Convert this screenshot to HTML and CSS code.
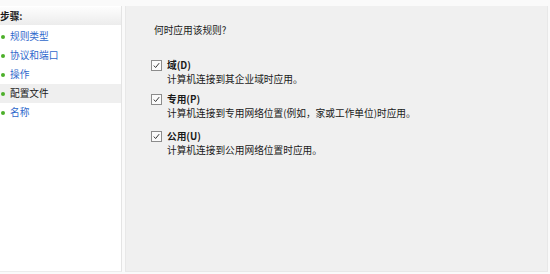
FILE: index.html
```html
<!DOCTYPE html>
<html lang="zh-CN">
  <head>
    <meta charset="UTF-8" />
    <title>新建入站规则向导 - 配置文件</title>
    <link rel="stylesheet" href="styles.css">
  </head>
  <body>
    <!-- 向导主体 -->
    <div class="wizard">
      <!-- 左侧步骤 -->
      <aside class="steps">
        <div class="steps-head">步骤:</div>
        <ul class="step-list">
          <li class="step">规则类型</li>
          <li class="step">协议和端口</li>
          <li class="step">操作</li>
          <li class="step on">配置文件</li>
          <li class="step">名称</li>
        </ul>
      </aside>

      <!-- 右侧内容 -->
      <main class="page">
        <p class="ask">何时应用该规则?</p>

        <div class="opt opt1">
          <span class="chk">
            <svg viewBox="0 0 11 11"><path d="M2.2 5.6 4.4 8 8.8 2.6" /></svg>
          </span>
          <div class="opt-txt">
            <div class="opt-name">域(D)</div>
            <div class="opt-desc">计算机连接到其企业域时应用。</div>
          </div>
        </div>

        <div class="opt opt2">
          <span class="chk">
            <svg viewBox="0 0 11 11"><path d="M2.2 5.6 4.4 8 8.8 2.6" /></svg>
          </span>
          <div class="opt-txt">
            <div class="opt-name">专用(P)</div>
            <div class="opt-desc">计算机连接到专用网络位置(例如，家或工作单位)时应用。</div>
          </div>
        </div>

        <div class="opt opt3">
          <span class="chk">
            <svg viewBox="0 0 11 11"><path d="M2.2 5.6 4.4 8 8.8 2.6" /></svg>
          </span>
          <div class="opt-txt">
            <div class="opt-name">公用(U)</div>
            <div class="opt-desc">计算机连接到公用网络位置时应用。</div>
          </div>
        </div>
      </main>
    </div>
  </body>
</html>
```

FILE: styles.css
```css
html,
body {
  margin: 0;
  padding: 0;
  overflow: hidden;
}
body {
  background: #fafafa;
  font-family: "Noto Sans CJK SC", "Liberation Sans", sans-serif;
  font-size: 9.7px;
  color: #1a1a1a;
}

/* 전체 */
.wizard {
  display: flex;
  padding-top: 6px;
  height: 266px;
}

/* 왼쪽 단계 */
.steps {
  width: 121px;
  background: #fff;
  border-right: 1px solid #e4e4e4;
  border-bottom: 1px solid #ececec;
}
.steps-head {
  height: 18px;
  line-height: 18px;
  margin-top: 1px;
  padding-left: 0;
  font-weight: bold;
  background: linear-gradient(to bottom, #fdfdfd, #ececec);
}
.step-list {
  list-style: none;
  margin: 0;
  padding: 2px 0 0;
}
.step {
  position: relative;
  height: 19px;
  line-height: 19px;
  padding-left: 10px;
  color: #2f68cc;
}
/* 초록 점 */
.step::before {
  content: "";
  position: absolute;
  left: 1px;
  top: 8px;
  width: 4px;
  height: 4px;
  border-radius: 50%;
  background: #4caf2a;
}
.step.on {
  color: #1a1a1a;
  background: #efefef;
}

/* 오른쪽 내용 */
.page {
  flex: 1;
  margin: 0 2px 0 3px;
  padding: 17px 0 0 28px;
  background: #f0f0f0;
  border: 1px solid #e8e8e8;
  border-top: 0;
}
.ask {
  margin: 0;
  line-height: 14px;
}

/* 체크박스 옵션 */
.opt {
  display: flex;
  margin-left: -3px;
  line-height: 14px;
}
.opt1 { margin-top: 21px; }
.opt2 { margin-top: 6px; }
.opt3 { margin-top: 9px; }

.chk {
  box-sizing: border-box;
  width: 11px;
  height: 11px;
  margin: 2px 5px 0 0;
  border: 1px solid #8c8c8c;
  background: #fbfbfb;
}
.chk svg {
  display: block;
  width: 9px;
  height: 9px;
}
.chk path {
  fill: none;
  stroke: #333;
  stroke-width: 1.2;
}
.opt-name {
  font-weight: bold;
}
```
